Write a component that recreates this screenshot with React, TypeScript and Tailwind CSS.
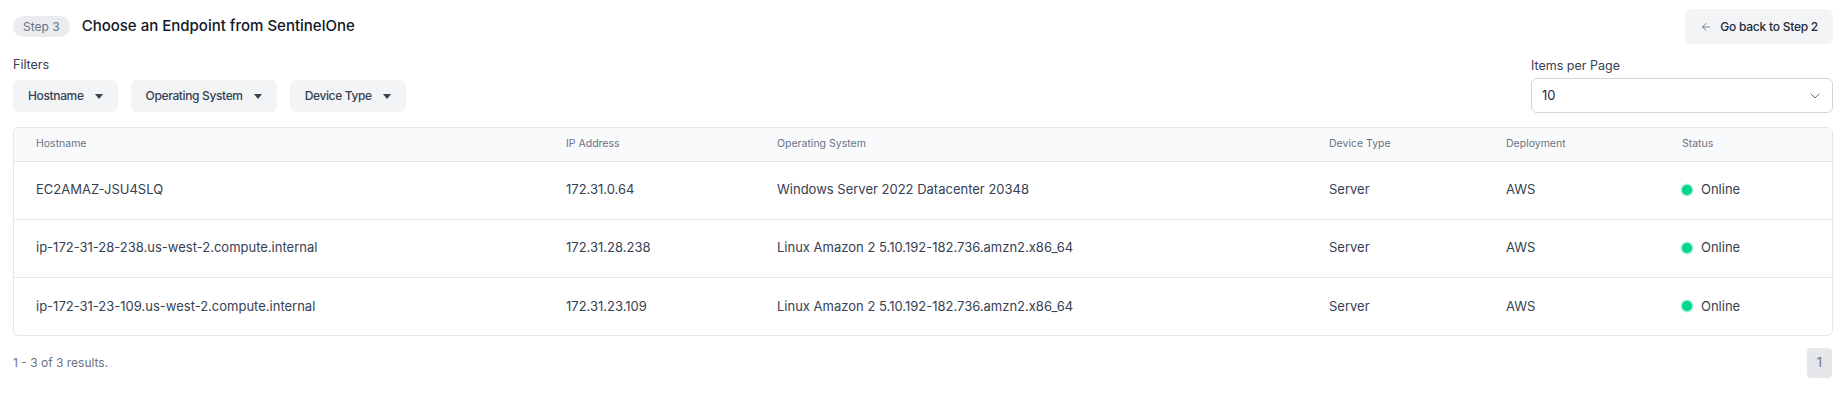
import { ArrowLeft, ChevronDown } from 'lucide-react';

const endpoints = [
    { hostname: 'EC2AMAZ-JSU4SLQ', ip: '172.31.0.64', os: 'Windows Server 2022 Datacenter 20348', type: 'Server', deployment: 'AWS', status: 'Online' },
    { hostname: 'ip-172-31-28-238.us-west-2.compute.internal', ip: '172.31.28.238', os: 'Linux Amazon 2 5.10.192-182.736.amzn2.x86_64', type: 'Server', deployment: 'AWS', status: 'Online' },
    { hostname: 'ip-172-31-23-109.us-west-2.compute.internal', ip: '172.31.23.109', os: 'Linux Amazon 2 5.10.192-182.736.amzn2.x86_64', type: 'Server', deployment: 'AWS', status: 'Online' },
];

const columns = ['Hostname', 'IP Address', 'Operating System', 'Device Type', 'Deployment', 'Status'];
const widths = ['w-[530px]', 'w-[211px]', 'w-[552px]', 'w-[177px]', 'w-[176px]', ''];

function Caret() {
    return (
        <svg width="8" height="5" viewBox="0 0 8 5" className="text-gray-700">
            <path d="M0 0h8L4 5z" fill="currentColor" />
        </svg>
    );
}

function FilterButton({ label }: { label: string }) {
    return (
        <button className="flex h-[32px] items-center gap-[11px] rounded-md bg-gray-100 pl-[15px] pr-[15px] text-[12px] font-medium tracking-[-0.03em] text-gray-700">
            {label}
            <Caret />
        </button>
    );
}

export default function App() {
    return (
        <div className="min-h-[408px] bg-white pl-[13px] pr-[14px] pt-[9px] font-['Inter',sans-serif] text-gray-800">
            <div className="flex h-[35px] items-center justify-between">
                <div className="flex items-center gap-3">
                    <span className="flex h-[21px] items-center rounded-full bg-gray-200/80 px-[10px] text-[12px] text-gray-500">Step 3</span>
                    <h1 className="text-[15px] font-medium text-gray-900">Choose an Endpoint from SentinelOne</h1>
                </div>
                <button className="flex h-[35px] items-center gap-[8px] rounded-md bg-gray-100 px-[15px] text-[12px] font-medium tracking-[-0.02em] text-gray-800">
                    <ArrowLeft className="h-3 w-3 text-gray-500" strokeWidth={1.75} />
                    Go back to Step 2
                </button>
            </div>

            <div className="mt-[13px] flex items-start justify-between">
                <div>
                    <div className="mb-[7px] text-[12.5px] leading-4 text-gray-700">Filters</div>
                    <div className="flex gap-[13px]">
                        <FilterButton label="Hostname" />
                        <FilterButton label="Operating System" />
                        <FilterButton label="Device Type" />
                    </div>
                </div>
                <div className="mt-[1px] w-[302px]">
                    <div className="mb-[4px] text-[12.5px] leading-4 text-gray-700">Items per Page</div>
                    <div className="flex h-[35px] items-center justify-between rounded-md border border-gray-300 pl-[10px] pr-[9px] text-[13px] text-gray-800">
                        10
                        <ChevronDown className="h-4 w-4 text-gray-500" strokeWidth={1.5} />
                    </div>
                </div>
            </div>

            <div className="mt-[14px] overflow-hidden rounded-md border border-gray-200">
                <table className="w-full table-fixed text-left">
                    <thead className="bg-gray-50">
                        <tr className="h-[33px] border-b border-gray-200">
                            {columns.map((c, i) => (
                                <th key={c} className={`${widths[i]} pl-[22px] text-[10.5px] font-normal text-gray-500`}>{c}</th>
                            ))}
                        </tr>
                    </thead>
                    <tbody className="text-[13px] text-gray-700">
                        {endpoints.map((e, i) => (
                            <tr key={e.hostname} className={`h-[58px] ${i < endpoints.length - 1 ? 'border-b border-gray-200' : ''}`}>
                                <td className="pl-[22px]">{e.hostname}</td>
                                <td className="pl-[22px]">{e.ip}</td>
                                <td className="pl-[22px]">{e.os}</td>
                                <td className="pl-[22px]">{e.type}</td>
                                <td className="pl-[22px]">{e.deployment}</td>
                                <td className="pl-[22px]">
                                    <div className="flex items-center gap-[9px]">
                                        <span className="h-[10px] w-[10px] rounded-full bg-emerald-400 ring-[1.5px] ring-emerald-200" />
                                        {e.status}
                                    </div>
                                </td>
                            </tr>
                        ))}
                    </tbody>
                </table>
            </div>

            <div className="mt-[12px] flex items-center justify-between">
                <span className="text-[12px] text-gray-500">1 - 3 of 3 results.</span>
                <button className="mr-[1px] flex h-[30px] w-[25px] items-center justify-center rounded bg-gray-200 text-[13px] text-gray-500">1</button>
            </div>
        </div>
    );
}
